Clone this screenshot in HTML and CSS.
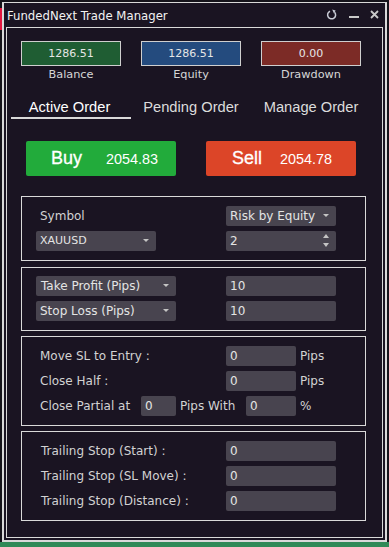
FILE: index.html
```html
<!DOCTYPE html>
<html>
<head>
<meta charset="utf-8">
<link rel="stylesheet" href="styles.css">
</head>
<body>
<div class="window">
  <div class="titlebar">
    <span class="title">FundedNext Trade Manager</span>
    <div class="tools">
      <svg class="ico" width="12" height="12" viewBox="0 0 12 12"><path d="M8.6 3.2 A4 4 0 1 1 4 2.2" fill="none" stroke="#c9ccd6" stroke-width="1.5"/><path d="M6.2 0.6 L9.6 1.6 L8 4.6 Z" fill="#c9ccd6"/></svg>
      <svg class="ico" width="11" height="12" viewBox="0 0 11 12"><rect x="0" y="7" width="10" height="2" fill="#c9c9c9"/></svg>
      <svg class="ico" width="9" height="12" viewBox="0 0 9 12"><path d="M1 2 L8 9 M8 2 L1 9" stroke="#c9c9c9" stroke-width="1.8"/></svg>
    </div>
  </div>
  <div class="panel">
    <div class="stats">
      <div class="stat"><div class="statbox green">1286.51</div><div class="statlabel">Balance</div></div>
      <div class="stat"><div class="statbox blue">1286.51</div><div class="statlabel">Equity</div></div>
      <div class="stat"><div class="statbox red">0.00</div><div class="statlabel">Drawdown</div></div>
    </div>
    <div class="tabs">
      <div class="tab active">Active Order</div>
      <div class="tab">Pending Order</div>
      <div class="tab">Manage Order</div>
    </div>
    <div class="trade">
      <div class="btn buy"><span class="side">Buy</span><span class="price">2054.83</span></div>
      <div class="btn sell"><span class="side">Sell</span><span class="price">2054.78</span></div>
    </div>

    <div class="section s1">
      <div class="label">Symbol</div>
      <div class="field w110 select">Risk by Equity<i class="arrow"></i></div>
      <div class="field w120 select sym">XAUUSD<i class="arrow"></i></div>
      <div class="field w110 spin">2<i class="up"></i><i class="down"></i></div>
    </div>

    <div class="section s2">
      <div class="field w140 select tp">Take Profit (Pips)<i class="arrow"></i></div>
      <div class="field w110">10</div>
      <div class="field w140 select">Stop Loss (Pips)<i class="arrow"></i></div>
      <div class="field w110">10</div>
    </div>

    <div class="section s3">
      <div class="label">Move SL to Entry :</div>
      <div class="field w70">0</div>
      <div class="unit">Pips</div>
      <div class="label">Close Half :</div>
      <div class="field w70">0</div>
      <div class="unit">Pips</div>
      <div class="partial">
        <span class="label pl">Close Partial at</span>
        <div class="field w35">0</div>
        <span class="unit pw">Pips With</span>
        <div class="field w50">0</div>
        <span class="unit">%</span>
      </div>
    </div>

    <div class="section s4">
      <div class="label">Trailing Stop (Start) :</div>
      <div class="field w110">0</div>
      <div class="label">Trailing Stop (SL Move) :</div>
      <div class="field w110">0</div>
      <div class="label">Trailing Stop (Distance) :</div>
      <div class="field w110">0</div>
    </div>
  </div>
</div>
</body>
</html>
```
FILE: styles.css
```css
html, body {
  margin: 0;
  padding: 0;
}
body {
  width: 389px;
  height: 547px;
  overflow: hidden;
  padding: 2px 0 0 2px;
  box-sizing: border-box;
  background:
    linear-gradient(to bottom, transparent 542px, #2f8a57 542px),
    linear-gradient(to bottom, transparent 8px, #e3163f 8px, #e3163f 30px, transparent 30px) 0 0 / 2px 100% no-repeat,
    #15131a;
  font-family: "DejaVu Sans", sans-serif;
  color: #d4d4d4;
}
.window {
  width: 385px;
  height: 540px;
  box-sizing: border-box;
  border: 2px solid #d9d9d9;
  border-top-width: 1px;
  background: #1a1422;
  display: flex;
  flex-direction: column;
}
.titlebar {
  height: 24px;
  display: flex;
  align-items: center;
  justify-content: space-between;
  padding-left: 3px;
}
.title {
  font-family: "DejaVu Sans Condensed", "DejaVu Sans", sans-serif;
  font-stretch: condensed;
  font-size: 13px;
  color: #f2f2f2;
  margin-top: 1px;
}
.tools {
  display: flex;
  align-items: center;
  padding-right: 6px;
}
.ico { display: block; }
.tools .ico:nth-child(1) { margin-right: 11px; }
.tools .ico:nth-child(2) { margin-right: 10px; }

.panel {
  margin: 0 2px 2px 2px;
  flex: 1;
  border: 1px solid #d9d9d9;
  padding: 13px 0 0 14px;
}
.stats {
  display: flex;
  gap: 20px;
}
.stat {
  width: 100px;
  display: flex;
  flex-direction: column;
  align-items: center;
}
.statbox {
  width: 100px;
  height: 25px;
  box-sizing: border-box;
  border: 1px solid #cfcfcf;
  display: flex;
  align-items: center;
  justify-content: center;
  font-size: 11px;
  color: #e6e6e6;
}
.green { background: #1f5d33; }
.blue { background: #244b7e; }
.red { background: #7c2b26; }
.statlabel {
  margin-top: 2px;
  font-size: 11.3px;
  line-height: 14px;
  color: #d6d6d6;
}

.tabs {
  display: flex;
  margin: 15px 0 0 -10px;
}
.tab {
  width: 120px;
  height: 20px;
  border-bottom: 2px solid transparent;
  font-family: "Liberation Sans", Arial, sans-serif;
  font-size: 14.7px;
  line-height: 20px;
  text-align: center;
  color: #dcdcdc;
}
.tab.active {
  color: #ffffff;
  border-bottom-color: #d9d9d9;
  text-indent: -3px;
}

.trade {
  display: flex;
  gap: 30px;
  margin: 22px 0 0 5px;
}
.btn {
  width: 150px;
  height: 35px;
  border-radius: 2px;
  display: flex;
  align-items: center;
  font-family: "Liberation Sans", Arial, sans-serif;
  color: #ffffff;
}
.buy { background: #22ab3b; }
.sell { background: #dc4528; }
.side {
  font-size: 18px;
  -webkit-text-stroke: 0.3px #fff;
}
.buy .side { margin-left: 25px; width: 55px; }
.sell .side { margin-left: 26px; width: 48px; }
.price { font-size: 14.4px; }

.section {
  width: 345px;
  box-sizing: border-box;
  border: 1px solid #d9d9d9;
  padding: 9px 0 9px 14px;
  display: grid;
  grid-template-columns: 190px 110px;
  grid-auto-rows: 20px;
  row-gap: 5px;
  align-items: center;
  font-size: 12px;
}
.s1 { margin-top: 20px; }
.s2 { margin-top: 6px; padding-top: 8px; }
.s3 { margin-top: 5px; grid-template-columns: 190px 70px auto; }
.s4 { margin-top: 5px; }

.label {
  padding-left: 4px;
  color: #d2d2d2;
  white-space: nowrap;
}
.s4 .label { padding-left: 5px; }
.field {
  position: relative;
  height: 20px;
  box-sizing: border-box;
  background: #48444f;
  border-radius: 2px;
  padding-left: 4px;
  line-height: 20px;
  color: #e4e4e4;
  white-space: nowrap;
}
.sym { font-size: 11px; }
.tp { padding-left: 5px; }
.w110 { width: 110px; }
.w120 { width: 120px; }
.w140 { width: 140px; }
.w70 { width: 70px; }
.w50 { width: 50px; }
.w35 { width: 35px; }
.unit {
  padding-left: 4px;
  color: #d2d2d2;
  white-space: nowrap;
}
.arrow {
  position: absolute;
  right: 7px;
  top: 8px;
  width: 0;
  height: 0;
  border-left: 3.5px solid transparent;
  border-right: 3.5px solid transparent;
  border-top: 3.5px solid #c4c4c4;
}
.up, .down {
  position: absolute;
  right: 7px;
  width: 0;
  height: 0;
  border-left: 3.5px solid transparent;
  border-right: 3.5px solid transparent;
}
.up { top: 3px; border-bottom: 4px solid #c4c4c4; }
.down { top: 12px; border-top: 4px solid #c4c4c4; }

.partial {
  grid-column: 1 / -1;
  display: flex;
  align-items: center;
}
.pl { width: 105px; box-sizing: border-box; flex: none; }
.pw { width: 70px; box-sizing: border-box; flex: none; }
.partial .field { flex: none; }
```
